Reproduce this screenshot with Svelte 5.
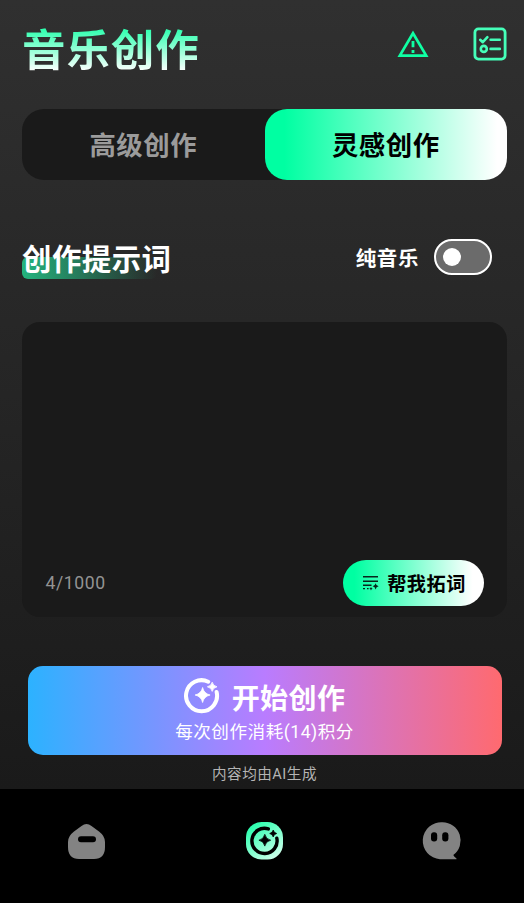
<script>
  let prompt = $state('');
  let mode = $state('inspire');
  let instrumental = $state(false);

  const count = 4;
  const limit = 1000;
  const cost = 14;

  const tabs = [
    { id: 'advanced', label: '高级创作' },
    { id: 'inspire', label: '灵感创作' },
  ];
</script>

<div class="page">
  <main class="content">
    <header class="header">
      <h1 class="title">音乐创作</h1>
      <div class="actions">
        <svg class="icon-warn" viewBox="0 0 32 28" width="32" height="28">
          <path d="M16 3.200 29.200 25.600H2.800Z" fill="none" stroke="#0fffa3" stroke-width="2.700" />
          <path d="M16 11v6.200M16 20v3" stroke="#0fffa3" stroke-width="2.800" />
        </svg>
        <svg class="icon-list" viewBox="0 0 34 34" width="34" height="34" fill="none" stroke="#45ffb9" stroke-width="2.800" stroke-linecap="round" stroke-linejoin="round">
          <rect x="1.900" y="1.900" width="30.200" height="30.200" rx="3.500" />
          <path d="m7.200 12.800 2.600 2.400 4.600-5M17.600 12.700h9.200M17.600 21.900h9.200" stroke-width="2.600" />
          <circle cx="10.800" cy="21.900" r="3" stroke-width="2.600" />
        </svg>
      </div>
    </header>

    <div class="tabs">
      {#each tabs as tab}
        <button class="tab" class:active={mode === tab.id} onclick={() => (mode = tab.id)}>{tab.label}</button>
      {/each}
    </div>

    <div class="section-head">
      <h2 class="section-title">创作提示词</h2>
      <div class="switch-row">
        <span class="switch-label">纯音乐</span>
        <button
          class="switch"
          class:on={instrumental}
          aria-label="纯音乐"
          onclick={() => (instrumental = !instrumental)}
        ><span class="knob"></span></button>
      </div>
    </div>

    <div class="prompt-box">
      <textarea class="prompt" bind:value={prompt} aria-label="创作提示词"></textarea>
      <div class="prompt-foot">
        <span class="counter">{count}/{limit}</span>
        <button class="expand">
          <svg viewBox="0 0 17 16" width="17" height="16">
            <path d="M1 1.800h15M1 6.200h15M1 10.200h8.500M1 13.600h2M5 13.600h1.600" fill="none" stroke="#06261b" stroke-width="1.400" />
            <path d="M13.600 8.200q.5 2.700 3 3.100-2.500.5-3 3.100-.5-2.600-3-3.100 2.500-.4 3-3.100ZM9 12q.3 1.400 1.600 1.700Q9.300 14 9 15.500 8.700 14 7.400 13.700 8.700 13.400 9 12Z" fill="#06261b" />
          </svg>
          <span>帮我拓词</span>
        </button>
      </div>
    </div>

    <button class="start">
      <span class="start-main">
        <svg viewBox="0 0 36 36" width="36" height="36">
          <path d="M24.200 3.700A15.500 15.500 0 1 0 32.600 14" fill="none" stroke="#fff" stroke-width="4" stroke-linecap="round" />
          <path d="M18.600 9.500q1.200 6 7.500 7.500-6.300 1.500-7.500 7.500-1.200-6-7.500-7.500 6.300-1.500 7.500-7.500ZM28.200 4.200q.8 3.700 4.800 4.600-4 .9-4.800 4.600-.8-3.700-4.800-4.600 4-.9 4.800-4.600Z" fill="#fff" stroke="#fff" stroke-width=".8" stroke-linejoin="round" />
        </svg>
        <span class="start-label">开始创作</span>
      </span>
      <span class="start-cost">每次创作消耗({cost})积分</span>
    </button>

    <p class="notice">内容均由AI生成</p>
  </main>

  <nav class="nav">
    <svg viewBox="0 0 37 38" width="37" height="38">
      <path d="M13.500 4Q18.500 0 23.500 4L31 9.500Q37 14 37 20V25Q37 37 26 37H11Q0 37 0 25V20Q0 14 6 9.500Z" fill="#838383" />
      <rect x="10" y="14.300" width="18" height="6" rx="3" fill="#000" />
    </svg>
    <svg viewBox="0 0 37 38" width="37" height="38">
      <defs>
        <linearGradient id="nav-fill" x1="0" y1="0" x2=".7" y2="1">
          <stop offset="0" stop-color="#12ffa5" />
          <stop offset="1" stop-color="#c9ffe9" />
        </linearGradient>
      </defs>
      <rect x="0" y="0" width="37" height="37.500" rx="15.500" fill="url(#nav-fill)" />
      <path d="M22.300 6.900A12.600 12.600 0 1 0 30.800 16.200" fill="none" stroke="#000" stroke-width="3.400" stroke-linecap="round" />
      <path d="M18.800 12.300q1 4.900 5.900 5.900-4.900 1-5.900 5.900-1-4.900-5.900-5.900 4.900-1 5.900-5.900ZM27.200 8q.6 2.800 3.500 3.500-2.900.7-3.500 3.500-.6-2.800-3.500-3.500 2.900-.7 3.500-3.500Z" fill="#000" stroke="#000" stroke-width=".7" stroke-linejoin="round" />
    </svg>
    <svg class="nav-me" viewBox="0 0 37 38" width="37" height="38">
      <path d="M18.500.3a18.200 18.200 0 0 1 10.800 32.800Q30 35 32.500 36.400V37.200H16A18.400 18.400 0 0 1 18.500.3Z" fill="#838383" />
      <rect x="7" y="10.300" width="6.200" height="9.200" rx="2.900" fill="#000" />
      <rect x="18.200" y="10.300" width="6.200" height="9.200" rx="2.900" fill="#000" />
    </svg>
  </nav>
</div>

<style>
  :global(body) {
    margin: 0;
    background: #000;
  }

  .page {
    width: 524px;
    height: 903px;
    display: flex;
    flex-direction: column;
    overflow: hidden;
    background: #000;
    font-family: Roboto, "Noto Sans CJK SC", sans-serif;
    color: #fff;
  }

  button {
    border: 0;
    padding: 0;
    font: inherit;
    cursor: pointer;
  }

  .content {
    box-sizing: border-box;
    height: 789px;
    padding: 20px 17px 0 22px;
    display: flex;
    flex-direction: column;
    background: linear-gradient(#303030, #1a1a1a);
  }

  .header {
    height: 60px;
    display: flex;
    justify-content: space-between;
    align-items: flex-start;
  }

  .title {
    margin: 3px 0 0;
    font-size: 43.500px;
    line-height: 58px;
    font-weight: 700;
    letter-spacing: 0.900px;
    background: linear-gradient(#1fffa9 5%, #fff 84%);
    -webkit-background-clip: text;
    background-clip: text;
    color: transparent;
  }

  .actions {
    display: flex;
    gap: 43.500px;
    padding-top: 7px;
    padding-right: 0.500px;
  }

  .icon-warn {
    margin-top: 3px;
  }

  .tabs {
    margin-top: 29px;
    height: 71px;
    display: flex;
    border-radius: 22px;
    background: #1a1a1a;
  }

  .tab {
    flex: 1;
    padding-bottom: 2px;
    border-radius: 22px;
    background: transparent;
    color: #9b9b9b;
    font-size: 26.400px;
    font-weight: 700;
    letter-spacing: 0.5px;
  }

  .tab.active {
    color: #000;
    background: linear-gradient(90deg, #00ffa2 8%, #fff 96%);
  }

  .section-head {
    margin-top: 54px;
    height: 46px;
    display: flex;
    justify-content: space-between;
    align-items: center;
  }

  .section-title {
    margin: 0;
    padding-top: 6px;
    font-size: 29.400px;
    line-height: 46px;
    font-weight: 700;
    letter-spacing: 0.5px;
    position: relative;
    z-index: 0;
  }

  .section-title::before {
    content: '';
    position: absolute;
    z-index: -1;
    left: 0;
    top: 26px;
    width: 135px;
    height: 22px;
    border-radius: 6px;
    background: linear-gradient(90deg, #24b47e, rgba(36, 180, 126, 0));
  }

  .switch-row {
    display: flex;
    align-items: center;
    gap: 15px;
    padding-right: 15px;
  }

  .switch-label {
    font-size: 20.500px;
    font-weight: 700;
    letter-spacing: 0.6px;
  }

  .switch {
    box-sizing: border-box;
    width: 58px;
    height: 36px;
    padding-left: 7px;
    border: 2px solid #fff;
    border-radius: 18px;
    background: #6b6b6b;
    display: flex;
    align-items: center;
  }

  .switch.on {
    justify-content: flex-end;
    padding: 0 7px 0 0;
    background: #00d98b;
  }

  .knob {
    width: 18px;
    height: 18px;
    border-radius: 50%;
    background: #fff;
  }

  .prompt-box {
    box-sizing: border-box;
    margin-top: 42px;
    height: 295px;
    padding: 23px 23px 11.500px;
    display: flex;
    flex-direction: column;
    border-radius: 18px;
    background: #1a1a1a;
  }

  .prompt {
    flex: 1;
    border: 0;
    padding: 0;
    resize: none;
    outline: none;
    background: transparent;
    color: #fff;
    font: inherit;
  }

  .prompt-foot {
    display: flex;
    align-items: center;
    justify-content: space-between;
  }

  .counter {
    padding-left: 0.500px;
    font-size: 17.600px;
    font-weight: 400;
    letter-spacing: 0.6px;
    color: #939393;
  }

  .expand {
    width: 141px;
    height: 46px;
    display: flex;
    align-items: center;
    justify-content: center;
    gap: 8px;
    padding: 1px 0 0 1px;
    border-radius: 23px;
    background: linear-gradient(90deg, #00ffa2 8%, #fff 92%);
    color: #000;
    font-size: 19.200px;
    font-weight: 700;
    letter-spacing: 0.5px;
    box-sizing: border-box;
  }

  .start {
    margin: 49px 5.500px 0;
    height: 89px;
    display: flex;
    flex-direction: column;
    align-items: center;
    border-radius: 15px;
    background: linear-gradient(90deg, #2cb2ff, #b97cff 50%, #ff6a6f);
    color: #fff;
  }

  .start-main {
    display: flex;
    align-items: center;
    gap: 12px;
    height: 53px;
    padding-top: 3px;
  }

  .start-label {
    padding-top: 2px;
    font-size: 28px;
    font-weight: 700;
    letter-spacing: 0.4px;
  }

  .start-cost {
    font-size: 17.600px;
    line-height: 20px;
    letter-spacing: 0.5px;
    font-weight: 400;
  }

  .notice {
    margin: 9px 0 0;
    text-align: center;
    font-size: 14.600px;
    line-height: 21px;
    letter-spacing: 0.5px;
    font-weight: 400;
    color: #b4b4b4;
  }

  .nav {
    flex: 1;
    display: flex;
    gap: 141px;
    padding: 33px 0 0 68px;
    background: #000;
  }

  .nav-me {
    overflow: visible;
  }
</style>
